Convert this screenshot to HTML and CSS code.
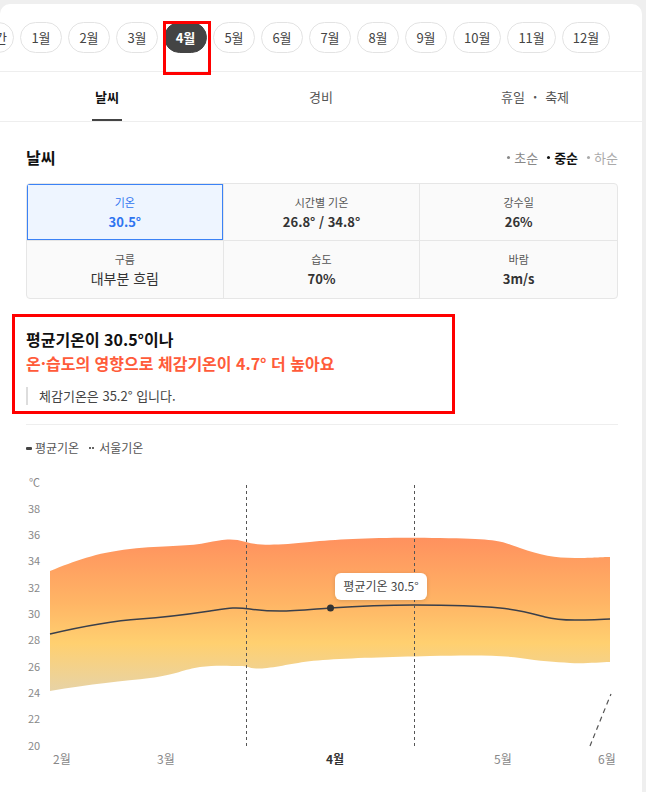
FILE: index.html
```html
<!DOCTYPE html>
<html lang="ko">
<head>
<meta charset="utf-8">
<title>날씨</title>
<link rel="stylesheet" href="styles.css">
</head>
<body>
<div class="card">
  <div class="months">
    <div class="month-track">
      <span class="pill first">연간</span>
      <span class="pill">1월</span>
      <span class="pill">2월</span>
      <span class="pill">3월</span>
      <span class="pill active">4월</span>
      <span class="pill">5월</span>
      <span class="pill">6월</span>
      <span class="pill">7월</span>
      <span class="pill">8월</span>
      <span class="pill">9월</span>
      <span class="pill">10월</span>
      <span class="pill">11월</span>
      <span class="pill">12월</span>
    </div>
  </div>
  <div class="tabs">
    <div class="tab selected"><span>날씨</span></div>
    <div class="tab"><span>경비</span></div>
    <div class="tab"><span>휴일<i class="sep">·</i>축제</span></div>
  </div>
  <div class="section">
    <div class="head">
      <h2 class="title">날씨</h2>
      <div class="filters">
        <span class="flt"><i class="dot"></i>초순</span>
        <span class="flt on"><i class="dot"></i>중순</span>
        <span class="flt light"><i class="dot"></i>하순</span>
      </div>
    </div>
    <div class="stats">
      <div class="cell sel"><div class="lbl">기온</div><div class="val">30.5°</div></div>
      <div class="cell"><div class="lbl">시간별 기온</div><div class="val">26.8° / 34.8°</div></div>
      <div class="cell"><div class="lbl">강수일</div><div class="val">26%</div></div>
      <div class="cell"><div class="lbl">구름</div><div class="val reg">대부분 흐림</div></div>
      <div class="cell"><div class="lbl">습도</div><div class="val">70%</div></div>
      <div class="cell"><div class="lbl">바람</div><div class="val">3m/s</div></div>
    </div>
    <div class="callout">
      <p class="c1">평균기온이 30.5°이나</p>
      <p class="c2">온·습도의 영향으로 체감기온이 4.7° 더 높아요</p>
      <p class="c3">체감기온은 35.2° 입니다.</p>
    </div>
    <div class="legend">
      <span class="lg"><i class="bar"></i>평균기온</span>
      <span class="lg"><i class="sq"></i><i class="sq"></i>서울기온</span>
    </div>
    <svg class="chart" width="642" height="326" viewBox="0 466 642 326" xmlns="http://www.w3.org/2000/svg">
      <defs>
        <linearGradient id="band" gradientUnits="userSpaceOnUse" x1="0" y1="537" x2="0" y2="692">
          <stop offset="0" stop-color="#ff915e"/>
          <stop offset="0.42" stop-color="#ffb565"/>
          <stop offset="0.68" stop-color="#ffd070"/>
          <stop offset="1" stop-color="#e6d3a8"/>
        </linearGradient>
        <filter id="sh" x="-20%" y="-40%" width="140%" height="180%">
          <feDropShadow dx="0" dy="1" stdDeviation="2" flood-color="#000" flood-opacity="0.15"/>
        </filter>
      </defs>
      <g class="ax">
        <text x="29" y="486">℃</text>
        <text x="28" y="512">38</text>
        <text x="28" y="538">36</text>
        <text x="28" y="564">34</text>
        <text x="28" y="591">32</text>
        <text x="28" y="617">30</text>
        <text x="28" y="643">28</text>
        <text x="28" y="670">26</text>
        <text x="28" y="696">24</text>
        <text x="28" y="722">22</text>
        <text x="28" y="749">20</text>
      </g>
      <path fill="url(#band)" d="M50,570 C75,560 95,552 130,548 S185,546 205,542 S232,537 246,541 S280,544 310,541 S380,536 440,537 S500,540 520,547 S555,557 575,557 S600,556 610,556 L610,661 C600,661 585,663 570,662 S540,660 520,657 S470,654 430,655 S350,657 323,659 S285,665 267,667 S250,665 240,665 S215,664 200,666 S175,674 150,677 S90,683 50,690 Z"/>
      <path fill="none" stroke="#3a3f4a" stroke-width="1.5" d="M50,633 C80,626 110,620 140,618 S190,613 210,610 S235,606 250,608 S265,610 280,610 S315,608 330,607 S380,604 414,604 S480,605 500,607 S530,612 545,616 S570,619 585,619 S605,618 610,618"/>
      <line x1="246.5" y1="484" x2="246.5" y2="746" stroke="#555" stroke-width="1" stroke-dasharray="3 3"/>
      <line x1="414.5" y1="484" x2="414.5" y2="746" stroke="#555" stroke-width="1" stroke-dasharray="3 3"/>
      <path d="M590,745 Q600,720 611,693" fill="none" stroke="#555" stroke-width="1.2" stroke-dasharray="5 4"/>
      <circle cx="330.5" cy="607" r="3.5" fill="#333"/>
      <rect x="335" y="572" width="92" height="27" rx="6" fill="#fff" filter="url(#sh)"/>
      <text class="tip" x="381" y="590" text-anchor="middle">평균기온 30.5°</text>
      <g class="xl">
        <text x="53" y="763">2월</text>
        <text x="157" y="763">3월</text>
        <text x="326" y="763" class="cur">4월</text>
        <text x="494" y="763">5월</text>
        <text x="598" y="763">6월</text>
      </g>
    </svg>
  </div>
  <div class="mark mark-month"></div>
  <div class="mark mark-callout"></div>
</div>
</body>
</html>
```
FILE: styles.css
```css
* { box-sizing: border-box; }
html, body { margin: 0; padding: 0; }
body {
  background: #efefef;
  font-family: "Noto Sans CJK KR", "Noto Sans", sans-serif;
  color: #222;
  overflow: hidden;
}
.card {
  position: relative;
  margin-top: 4px;
  width: 642px;
  height: 788px;
  background: #fff;
  border-radius: 10px 10px 0 0;
  overflow: hidden;
}
.months {
  height: 68px;
  border-bottom: 1px solid #eeeeee;
  overflow: hidden;
  padding-top: 18px;
}
.month-track {
  display: flex;
  gap: 6px;
  white-space: nowrap;
}
.pill {
  flex: none;
  display: flex;
  align-items: center;
  justify-content: center;
  height: 31px;
  min-width: 42px;
  padding: 0 10px;
  border: 1px solid #e3e3e3;
  border-radius: 16px;
  font-size: 13px;
  color: #444;
  background: #fff;
}
.pill.first {
  margin-left: -36px;
  min-width: 50px;
  justify-content: flex-end;
  padding-right: 6px;
}
.pill.active {
  background: #444;
  border-color: #444;
  color: #fff;
  font-weight: 700;
  min-width: 43px;
}
.tabs {
  display: flex;
  height: 50px;
  border-bottom: 1px solid #eeeeee;
}
.tab {
  flex: 1;
  display: flex;
  justify-content: center;
  align-items: stretch;
  font-size: 13px;
  color: #555;
}
.tab span {
  display: flex;
  align-items: center;
  padding: 2px 3px 0;
  border-bottom: 2px solid transparent;
}
.sep { font-style: normal; margin: 0 8px; font-weight: 700; }
.tab.selected span {
  color: #111;
  font-weight: 700;
  border-bottom-color: #444;
}
.section {
  padding: 24px 24px 0 26px;
}
.head {
  display: flex;
  justify-content: space-between;
  align-items: center;
  height: 22px;
  margin-bottom: 15px;
}
.title {
  margin: 0;
  font-size: 16px;
  font-weight: 700;
  line-height: 22px;
  color: #111;
}
.filters {
  display: flex;
  gap: 9px;
  font-size: 13px;
  color: #888;
}
.flt { display: flex; align-items: center; gap: 4px; }
.flt.on { color: #111; font-weight: 700; }
.flt.light { color: #aaa; }
.dot {
  width: 3px; height: 3px; border-radius: 50%;
  background: currentColor;
  display: inline-block;
}
.stats {
  display: grid;
  grid-template-columns: 1fr 1fr 1fr;
  border: 1px solid #e6e6e6;
  border-radius: 4px;
  background: #fafafa;
  overflow: hidden;
}
.cell {
  height: 57px;
  display: flex;
  flex-direction: column;
  align-items: center;
  justify-content: center;
  border-right: 1px solid #e6e6e6;
  border-bottom: 1px solid #e6e6e6;
  gap: 3px;
}
.cell:nth-child(3n) { border-right: none; }
.cell:nth-child(n+4) { border-bottom: none; height: 57px; }
.cell.sel {
  background: #eef5ff;
  box-shadow: inset 0 0 0 1px #3b82f6;
  color: #2f74f0;
}
.lbl { font-size: 11px; line-height: 15px; color: #555; }
.val { font-size: 13px; line-height: 17px; font-weight: 700; color: #333; }
.cell.sel .lbl, .cell.sel .val { color: #2f74f0; }
.val.reg { font-size: 14px; font-weight: 400; }
.callout {
  margin-top: 28px;
  padding-bottom: 19px;
  border-bottom: 1px solid #eeeeee;
}
.callout p { margin: 0; }
.c1 { font-size: 16px; line-height: 24px; font-weight: 700; color: #111; }
.c2 { font-size: 16px; line-height: 24px; font-weight: 700; color: #ff5b3a; }
.c3 {
  margin-top: 12px !important;
  font-size: 13px;
  line-height: 18px;
  color: #444;
  border-left: 2px solid #ddd;
  padding-left: 11px;
}
.legend {
  display: flex;
  gap: 10px;
  margin-top: 15px;
  font-size: 12px;
  line-height: 16px;
  color: #555;
}
.lg { display: flex; align-items: center; }
.bar { display: inline-block; width: 6px; height: 3px; border-radius: 1px; background: #444; margin-right: 3px; }
.sq { display: inline-block; width: 2px; height: 2px; background: #666; margin-right: 1px; }
.sq + .sq { margin-right: 5px; }
.chart {
  display: block;
  margin-top: 11px;
  margin-left: -26px;
}
.ax text { font-size: 11px; fill: #888; font-family: "Noto Sans CJK KR", sans-serif; }
.xl text { font-size: 12px; fill: #888; font-family: "Noto Sans CJK KR", sans-serif; }
.xl text.cur { fill: #333; font-weight: 700; }
.tip { font-size: 12px; fill: #444; font-family: "Noto Sans CJK KR", sans-serif; }
.mark {
  position: absolute;
  border: 3px solid #ff0000;
  pointer-events: none;
}
.mark-month { left: 163px; top: 17px; width: 48px; height: 54px; }
.mark-callout { left: 12px; top: 310px; width: 443px; height: 100px; }
```
